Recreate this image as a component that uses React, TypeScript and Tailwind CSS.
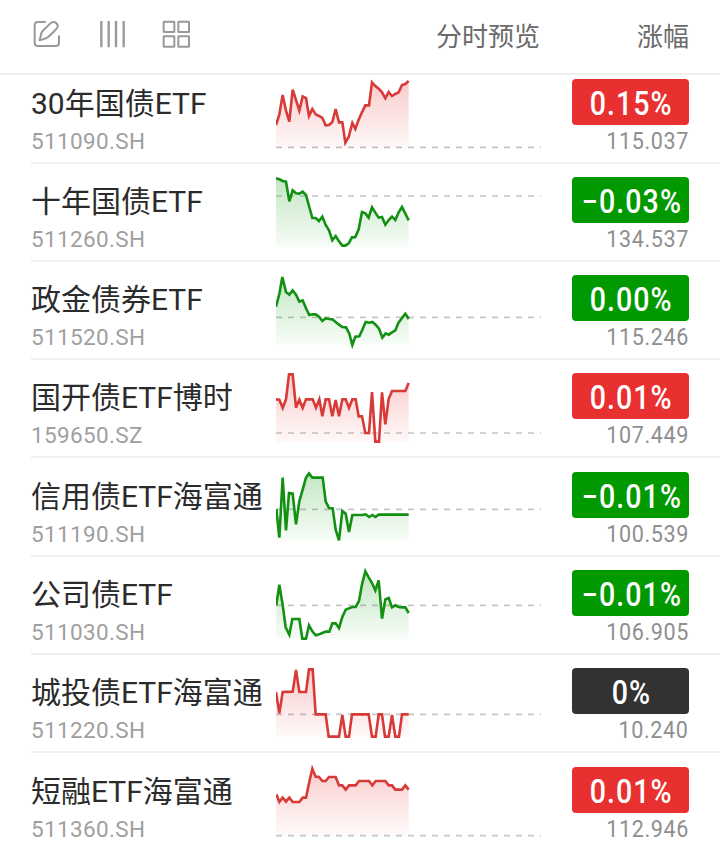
import React from "react";

type Tone = "up" | "down" | "flat";

interface Fund {
  name: string;
  code: string;
  change: string;
  price: string;
  tone: Tone;
  height: string;
  // Sparkline data: viewBox top, baseline level and polyline points (3 units = 1px)
  top: number;
  base: number;
  line: string;
}

const funds: Fund[] = [
  {
    name: "30年国债ETF", code: "511090.SH", change: "0.15%", price: "115.037", tone: "up", height: "h-[89px]", top: 15, base: 232,
    line: "33,165 43,133 53,75 63,122 73,155 83,59 93,90 103,122 113,79 123,84 132,138 142,117 152,133 162,138 172,144 182,166 192,165 202,156 212,117 222,157 232,157 241,218 251,201 262,159 271,177 281,149 291,127 301,106 312,106 321,37 331,48 341,56 351,67 361,85 371,66 381,78 391,72 401,67 411,45 421,42 431,33",
  },
  {
    name: "十年国债ETF", code: "511260.SH", change: "−0.03%", price: "134.537", tone: "down", height: "h-[98px]", top: 15, base: 84,
    line: "33,31 43,34 53,39 63,41 73,100 83,67 93,76 103,77 113,71 123,81 132,114 142,150 152,150 162,159 172,146 182,171 192,187 202,217 212,204 222,220 232,233 241,233 251,226 261,208 271,207 281,184 291,132 301,136 311,149 321,118 331,134 341,149 351,147 361,170 371,156 381,146 391,156 401,133 411,117 421,137 431,157",
  },
  {
    name: "政金债券ETF", code: "511520.SH", change: "0.00%", price: "115.246", tone: "down", height: "h-[98px]", top: 15, base: 154,
    line: "33,122 43,84 52,33 63,78 73,86 83,73 93,86 103,107 113,103 123,127 133,147 142,145 152,145 162,152 172,165 182,157 192,159 202,160 212,168 222,176 232,183 243,184 253,203 262,237 271,212 283,211 292,191 302,168 312,170 322,168 332,176 342,188 352,215 362,202 371,206 381,199 391,193 401,169 411,156 421,143 431,159",
  },
  {
    name: "国开债ETF博时", code: "159650.SZ", change: "0.01%", price: "107.449", tone: "up", height: "h-[98px]", top: 15, base: 207,
    line: "33,106 43,107 53,132 63,106 72,31 83,31 93,131 103,107 113,132 123,106 143,106 153,131 163,106 172,157 182,106 192,106 202,157 212,108 222,157 232,106 242,106 252,132 262,106 272,106 281,157 291,157 301,207 312,207 321,84 331,233 342,233 351,85 361,181 371,105 381,81 421,81 431,57",
  },
  {
    name: "信用债ETF海富通", code: "511190.SH", change: "−0.01%", price: "100.539", tone: "down", height: "h-[99px]", top: 18, base: 142,
    line: "34,141 43,227 53,47 63,205 72,93 83,95 93,187 103,118 113,83 123,47 132,34 142,47 173,47 182,118 192,138 203,139 212,203 222,235 232,147 242,155 252,210 262,159 292,159 302,157 312,165 322,159 331,165 341,158 431,158",
  },
  {
    name: "公司债ETF", code: "511030.SH", change: "−0.01%", price: "106.905", tone: "down", height: "h-[98px]", top: 18, base: 136,
    line: "34,136 43,74 53,135 62,202 73,224 82,177 103,177 112,236 123,236 132,196 142,214 152,226 162,223 172,219 182,215 193,215 202,190 212,190 222,204 232,171 242,149 252,145 262,141 272,141 282,123 291,73 301,34 311,52 321,69 331,91 341,61 351,176 361,118 371,114 381,142 391,136 401,141 411,142 421,142 431,159",
  },
  {
    name: "城投债ETF海富通", code: "511220.SH", change: "0%", price: "10.240", tone: "flat", height: "h-[98px]", top: 18, base: 169,
    line: "33,102 43,166 53,102 83,101 93,36 103,102 123,102 132,34 143,34 152,169 182,169 191,236 222,236 232,171 242,236 252,236 261,169 311,169 321,236 332,236 341,169 351,169 360,236 371,236 381,171 391,236 402,236 411,169 431,169",
  },
  {
    name: "短融ETF海富通", code: "511360.SH", change: "0.01%", price: "112.946", tone: "up", height: "h-[99px]", top: 21, base: 239,
    line: "34,115 43,138 53,125 63,137 73,125 83,138 103,138 113,125 123,125 133,77 142,38 152,62 162,63 172,75 182,75 192,63 212,63 222,88 232,88 242,101 252,88 272,88 282,75 312,75 322,88 332,75 361,75 371,88 381,88 391,101 411,101 421,88 431,101",
  },
];

const badge: Record<Tone, string> = {
  up: "bg-[#e93030]",
  down: "bg-[#009900]",
  flat: "bg-[#323232]",
};

function Sparkline({ fund, id }: { fund: Fund; id: string }) {
  const green = fund.tone === "down";
  const stroke = green ? "#129012" : "#d83a38";
  const fill = green ? "#0a9a0a" : "#e93030";
  const bottom = 236;
  return (
    <svg className="h-[87px] w-[265px] shrink-0" viewBox={`33 ${fund.top} 795 261`}>
      <defs>
        <linearGradient id={id} x1="0" x2="0" y1="30" y2={bottom} gradientUnits="userSpaceOnUse">
          <stop offset="0" stopColor={fill} stopOpacity="0.25" />
          <stop offset="1" stopColor={fill} stopOpacity="0.03" />
        </linearGradient>
      </defs>
      <line x1="33" x2="828" y1={fund.base} y2={fund.base} stroke="#c6c6c6" strokeWidth="5" strokeDasharray="18 18" />
      <polygon points={`33,${bottom} ${fund.line} 431,${bottom}`} fill={`url(#${id})`} />
      <polyline points={fund.line} fill="none" stroke={stroke} strokeWidth="7.8" strokeLinejoin="miter" />
    </svg>
  );
}

function EditIcon() {
  return (
    <svg className="h-7 w-7" viewBox="98 60 84 84" fill="none" stroke="#999" strokeWidth="6" strokeLinecap="round" strokeLinejoin="round">
      <path d="M134 66H113Q103 66 103 76V128Q103 138 113 138H166Q176 138 176 128V109" />
      <path d="M118 121L123 100Q124 96 127 93L150 70Q158 63 166 68Q176 75 170 84Q168 88 147 108Q142 113 136 115Z" />
    </svg>
  );
}

function ColumnsIcon() {
  return (
    <svg className="h-7 w-7" viewBox="297 60 84 84" stroke="#999" strokeWidth="7">
      <path d="M304 63V142M326 63V142M348 63V142M371 63V142" />
    </svg>
  );
}

function GridIcon() {
  return (
    <svg className="h-7 w-7" viewBox="486 60 84 84" fill="none" stroke="#999" strokeWidth="6">
      <rect x="491" y="65" width="32" height="31" rx="1" />
      <rect x="535" y="65" width="32" height="31" rx="1" />
      <rect x="491" y="109" width="32" height="31" rx="1" />
      <rect x="535" y="109" width="32" height="31" rx="1" />
    </svg>
  );
}

export default function App() {
  return (
    <div className="h-[846px] w-[720px] overflow-hidden bg-white font-[Roboto,'Noto_Sans_CJK_SC',sans-serif]">
      <header className="flex h-[75px] items-start justify-between border-b-2 border-[#efefef] pr-[31px] pl-[33px]">
        <div className="flex pt-5">
          <EditIcon />
          <div className="pl-[38px]"><ColumnsIcon /></div>
          <div className="pl-[35px]"><GridIcon /></div>
        </div>
        <div className="flex gap-[97px] pt-[18px] text-[26px] leading-[38px] text-[#6a6a6a]">
          <span>分时预览</span>
          <span>涨幅</span>
        </div>
      </header>
      <main>
        {funds.map((fund, i) => (
          <div key={fund.code} className={`flex items-end ${fund.height}`}>
            <div className="ml-[31px] flex flex-1 items-end border-b-2 border-[#efefef] pr-[31px]">
              <div className="flex h-[83px] w-[245px] shrink-0 flex-col whitespace-nowrap">
                <span className="pt-1 text-[30px] leading-[42px] text-[#2b2b2b]">{fund.name}</span>
                <span className="pt-[2px] text-[22.5px] leading-[28px] tracking-[0.35px] text-[#9f9f9f]">{fund.code}</span>
              </div>
              <Sparkline fund={fund} id={`spark-${i}`} />
              <div className="flex h-[83px] flex-1 flex-col items-end">
                <div className={`flex h-[46px] w-[117px] items-center justify-center rounded-[4px] pt-[5px] pl-[2px] ${badge[fund.tone]}`}>
                  <span className="scale-x-[0.88] text-[32.5px] leading-none font-medium tracking-[1.2px] text-white">{fund.change}</span>
                </div>
                <span className="origin-right scale-x-[0.88] pt-[2px] text-[24.5px] leading-[28px] tracking-[0.7px] text-[#8f8f8f]">{fund.price}</span>
              </div>
            </div>
          </div>
        ))}
      </main>
    </div>
  );
}
